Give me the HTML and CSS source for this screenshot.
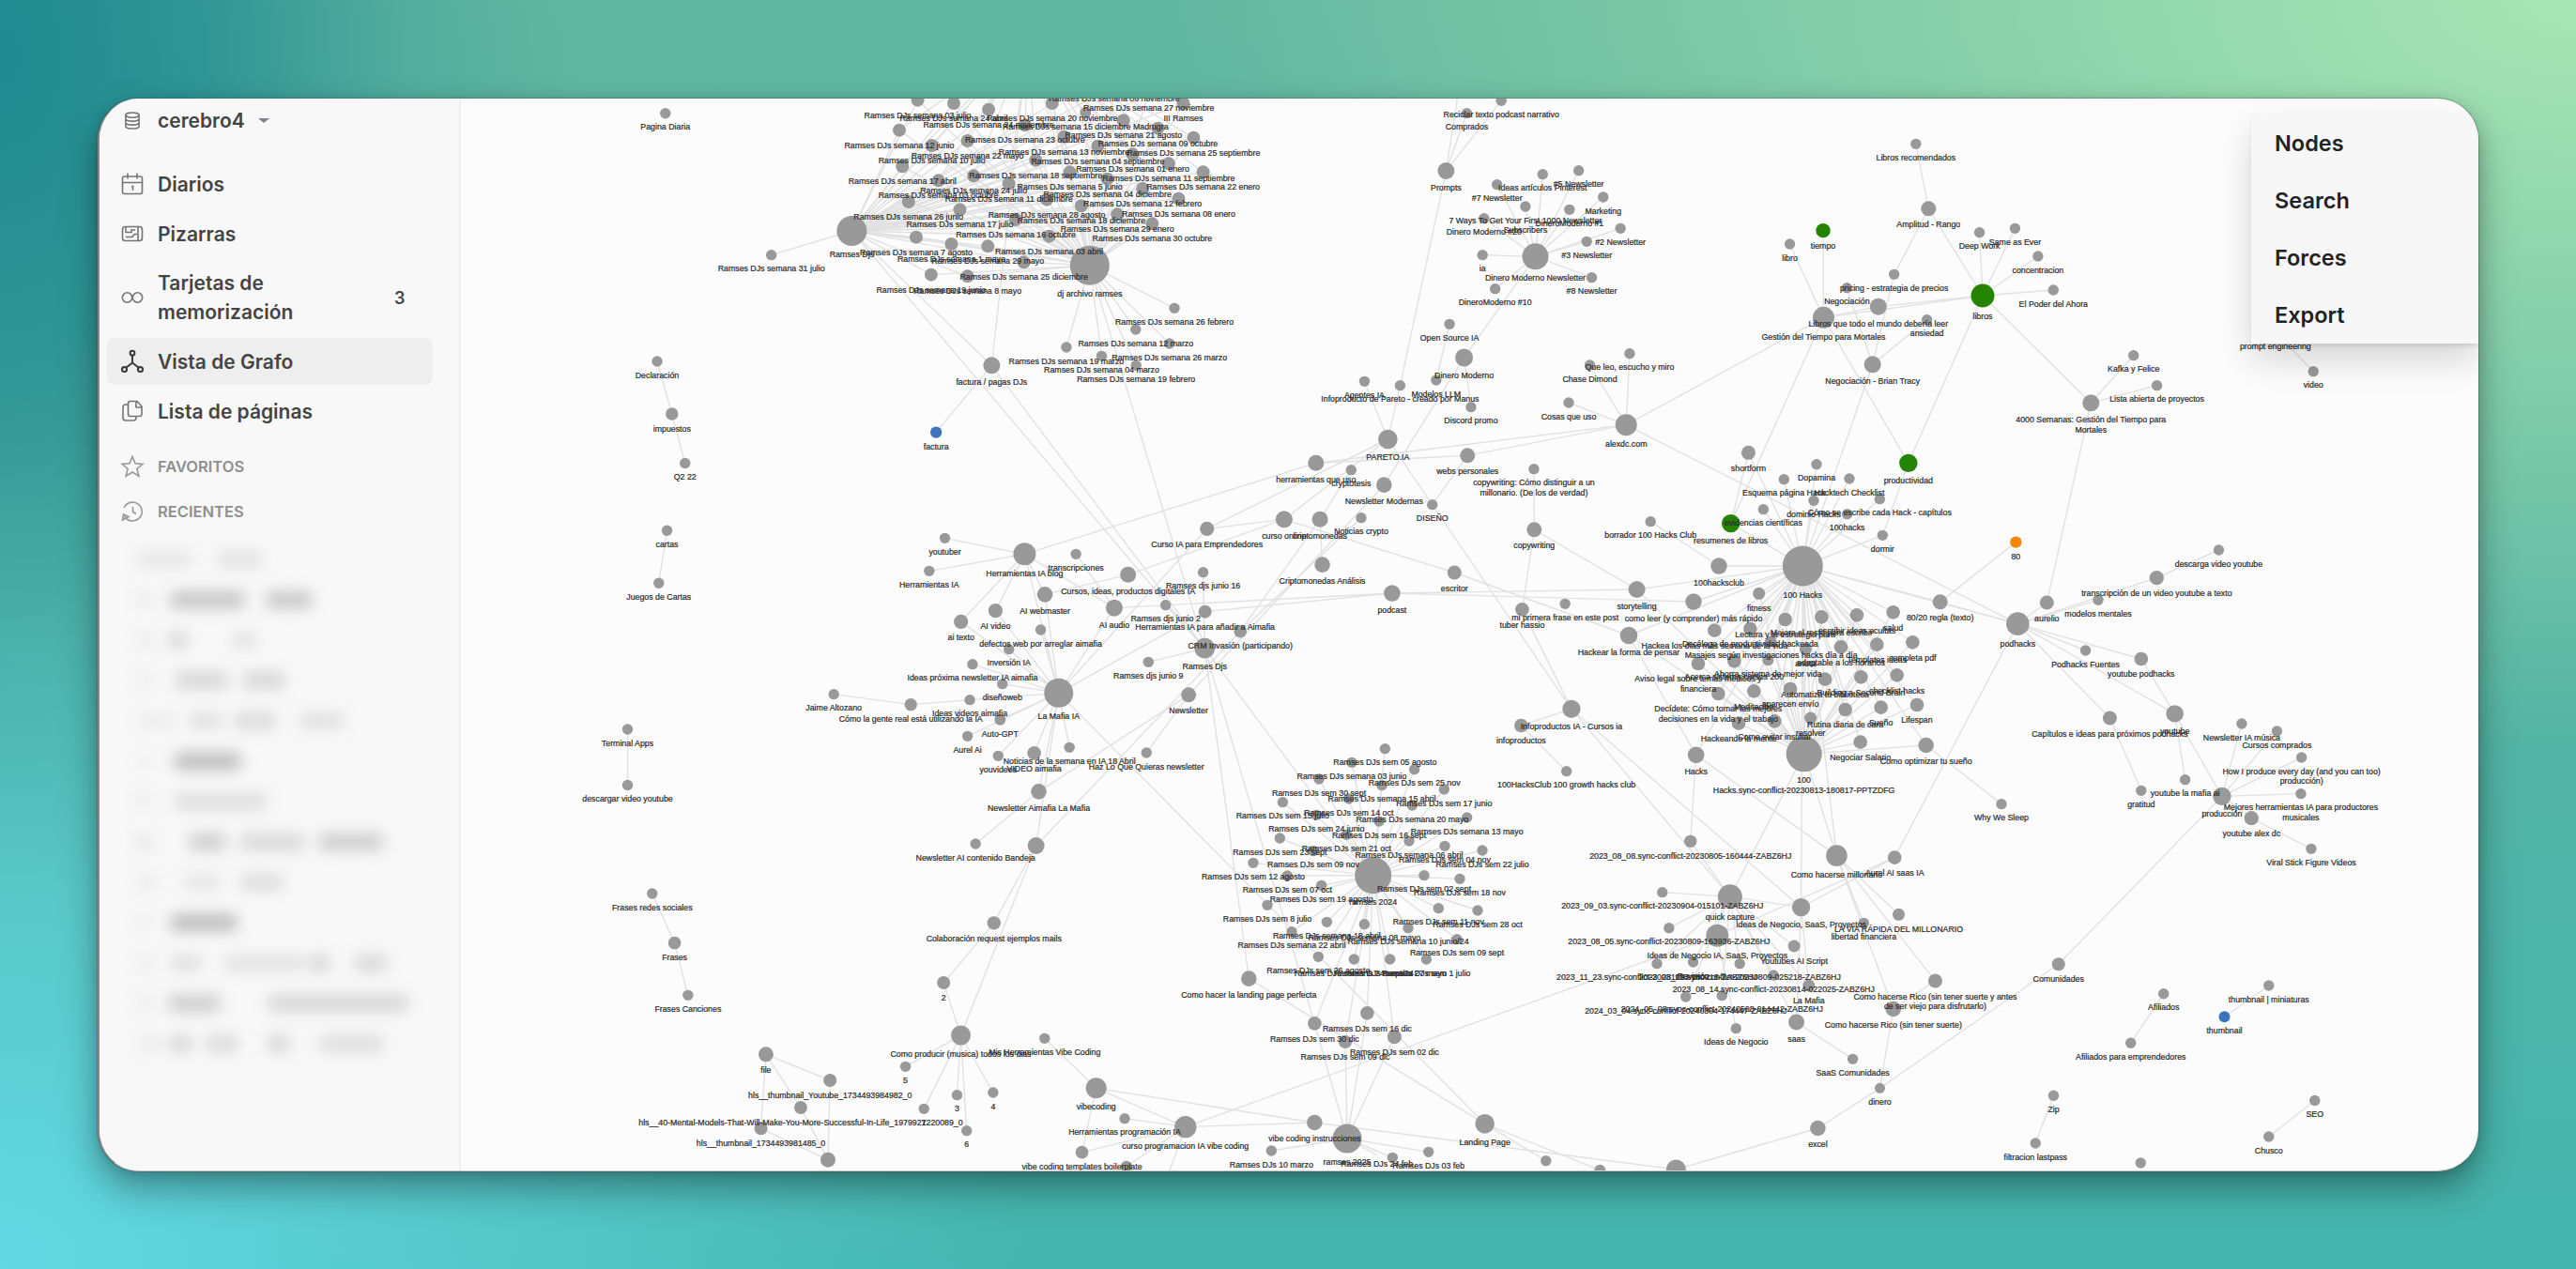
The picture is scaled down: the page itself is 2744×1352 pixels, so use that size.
FILE: index.html
```html
<!DOCTYPE html>
<html lang="es">
<head>
<meta charset="utf-8">
<title>cerebro4</title>
<link rel="stylesheet" href="styles.css">
</head>
<body>
<div class="window">
  <aside class="sidebar">
    <div class="row repo">
      <svg class="icon" viewBox="0 0 24 24"><ellipse cx="12" cy="4.500" rx="9" ry="3.300"/><path d="M3 4.500v15c0 1.900 4 3.300 9 3.300s9-1.400 9-3.300v-15M3 9.500c0 1.900 4 3.300 9 3.300s9-1.400 9-3.300M3 14.500c0 1.900 4 3.300 9 3.300s9-1.400 9-3.300"/></svg>
      <span>cerebro4</span><i class="caret"></i>
    </div>
    <nav class="nav">
      <a class="row item"><svg class="icon" viewBox="0 0 24 24"><rect x="1.500" y="4" width="21" height="18.500" rx="2"/><path d="M1.500 10.500h21M7 .5v6M17 .5v6M11 14.500h1.500v4.500"/></svg><span>Diarios</span></a>
      <a class="row item"><svg class="icon" viewBox="0 0 24 24"><rect x="1.500" y="4.500" width="21" height="15" rx="3"/><path d="M5 5v5.500h6V8h4M5 15.500h7l2-3h3M18 5v14"/></svg><span>Pizarras</span></a>
      <a class="row item tall"><svg class="icon" viewBox="0 0 24 24"><circle cx="6.500" cy="12" r="5.200"/><circle cx="17.500" cy="12" r="5.200"/></svg><span>Tarjetas de memorización</span><b class="count">3</b></a>
      <a class="row item active"><svg class="icon" viewBox="0 0 24 24"><circle cx="12" cy="3.200" r="2.400"/><circle cx="3.500" cy="20.500" r="2.600"/><circle cx="20.500" cy="20.500" r="2.600"/><path d="M12 6v8M12 13.500l-6.500 5M12 13.500l6.500 5"/></svg><span>Vista de Grafo</span></a>
      <a class="row item"><svg class="icon" viewBox="0 0 24 24"><path d="M10 1.500h7l5 5.500v8a2.500 2.500 0 0 1-2.500 2.500H10A2.500 2.500 0 0 1 7.500 15V4A2.500 2.500 0 0 1 10 1.500zM16 1.500V8h6M7.500 5H5a3 3 0 0 0-3 3v11a3 3 0 0 0 3 3h8a3 3 0 0 0 3-3v-1.500"/></svg><span>Lista de páginas</span></a>
    </nav>
    <div class="row section"><svg class="icon" viewBox="0 0 24 24"><path d="M12 1.500l3 7.300 8 .6-6.100 5.100 2 7.700L12 18l-6.900 4.200 2-7.700L1 9.400l8-.6z"/></svg><span>FAVORITOS</span></div>
    <div class="row section"><svg class="icon" viewBox="0 0 24 24"><path d="M3.500 17A10 10 0 1 0 3 8M1.500 21l1-6 5.500 2.500zM12.500 7v5.500l3.500 2"/></svg><span>RECIENTES</span></div>
    <div class="recents" id="recents"></div>
  </aside>
  <main class="canvas">
    <svg class="graph" id="graph" viewBox="491 105 2149 1142" preserveAspectRatio="none"></svg>
    <div class="panel">
      <div class="tab">Nodes</div>
      <div class="tab">Search</div>
      <div class="tab">Forces</div>
      <div class="tab">Export</div>
    </div>
  </main>
</div>
<script src="graph.js"></script>
</body>
</html>
```
FILE: styles.css
```css
* { box-sizing: border-box; }
body {
  margin: 0;
  width: 2744px;
  height: 1352px;
  padding: 105px 104px;
  overflow: hidden;
  font-family: Inter, "Liberation Sans", sans-serif;
  background:
    radial-gradient(ellipse 620px 900px at 0 60px, #1f8a91 0%, rgba(31, 138, 145, .75) 35%, rgba(31, 138, 145, .22) 70%, rgba(31, 138, 145, 0) 100%),
    radial-gradient(ellipse 1100px 900px at 0 1352px, #62d8e2 0%, rgba(98, 216, 226, 0) 100%),
    radial-gradient(ellipse 1500px 800px at 2744px 0, #a8e5b4 0%, rgba(168, 229, 180, 0) 100%),
    linear-gradient(180deg, #62b7a0 0%, #55b3a2 50%, #44b5ae 100%);
}
.window {
  display: flex;
  width: 2536px;
  height: 1143px;
  border-radius: 44px;
  overflow: hidden;
  background: #fcfcfc;
  border-left: 2px solid #8d8686;
  border-bottom: 1px solid #c9c9c9;
  box-shadow: 0 0 0 1px rgba(70, 70, 70, .3), 0 18px 38px rgba(0, 0, 0, .36), 0 2px 12px rgba(0, 0, 0, .13);
}
.sidebar {
  width: 385px;
  flex: none;
  background: #f8f8f8;
  border-right: 2px solid #f1f1f1;
  padding-left: 8px;
  display: flex;
  flex-direction: column;
}
.row {
  display: flex;
  align-items: center;
  gap: 15px;
  padding-left: 15px;
  font-size: 21px;
  font-weight: 600;
  color: #444;
}
.icon {
  width: 24px;
  height: 24px;
  flex: none;
  fill: none;
  stroke: #747474;
  stroke-width: 1.6;
  overflow: visible;
}
.repo { height: 46px; margin-bottom: 20px; }
.repo .icon { height: 19px; stroke-width: 2; }
.caret {
  border: 6px solid transparent;
  border-top: 5px solid #7d8190;
  border-bottom: 0;
  margin-left: -1px;
}
.nav { display: flex; flex-direction: column; gap: 3px; width: 347px; }
.item { height: 50px; border-radius: 8px; line-height: 31px; }
.tall { height: 80px; }
.tall span { width: 200px; }
.count { font-size: 18px; font-weight: 600; margin-left: 37px; }
.active { background: #eee; }
.active .icon { stroke: #3a3a3a; stroke-width: 2; }
.section { height: 48px; font-size: 16.5px; color: #8f8f8f; }
.section .icon { stroke: #999; }
.nav + .section { margin-top: 10px; }
.recents {
  margin: 6px 0 0 19px;
  width: 320px;
  height: 588px;
  overflow: hidden;
  display: flex;
  flex-direction: column;
  gap: 25px;
  padding-top: 12px;
}
.blurred { display: flex; height: 18px; flex: none; filter: blur(8px); }
.blurred i { height: 18px; border-radius: 7px; background: #6a6a6a; }
.canvas { position: relative; flex: 1; }
.graph { display: block; width: 100%; height: 100%; }
.edge { stroke: #e1e1e1; stroke-width: 1.4; }
.node { fill: #999; }
.green { fill: #248400; }
.blue { fill: #3c74bf; }
.orange { fill: #f48709; }
.label {
  font: 8.8px "Liberation Sans", Arial, sans-serif;
  fill: #2c2c2c;
  stroke: #2c2c2c;
  stroke-width: .22;
  text-anchor: middle;
}
.panel {
  position: absolute;
  top: 17px;
  right: 0;
  width: 242px;
  height: 244px;
  background: #f7f7f7;
  box-shadow: 0 18px 34px rgba(0, 0, 0, .15), 0 4px 4px -1px rgba(0, 0, 0, .1);
}
.tab {
  height: 61px;
  line-height: 61px;
  padding-left: 25px;
  font-size: 23.5px;
  font-weight: 600;
  color: #222;
}
```
FILE: graph.js
```js
// Each sector: origin and scale of its local grid, then one node per line:
//   x y radius[colour] @id label > linked ids
// "&a b" sets links shared by the lines after it. "~" and "^" expand to series titles.
const SECTORS = [
[0, 0, 1/1.75, 1/1.75, `
405 69 5.7 Pagina Diaria
400 220 5.7 @dec Declaración
409 252 6.7 @imp impuestos > dec
417 282 5.7 Q2 22 > imp
406 323 5.7 @car cartas
401 355 5.7 Juegos de Cartas > car
382 444 5.7 @ter Terminal Apps
382 478 5.7 descargar video youtube > ter
397 544 5.7 Frases redes sociales > fr
1253 587 7 @comun Comunidades
1317 605 5.7 @afi Afiliados
1297 635 5.7 Afiliados para emprendedores > afi
1381 600 5.7 @mini thumbnail | miniaturas
1354 619 6b thumbnail > mini
1409 670 5.7 @seo SEO
1381 692 5.7 Chusco > seo
1250 667 5.7 @zip Zip
1239 696 5.7 filtracion lastpass > zip
1303 708 5.7`],
[740, 100, 2.45, 3, `
870 -170 0 @top > h1 h2 fac
410 438 16 @h1 Ramses Djs
1031 548 21 @h2 dj archivo ramses
&h1
200 515 5.7 ~31 julio
&h1 h2 top
582 20 7 ~03 julio
676 30 7 ~24 abril
767 50 7 ~24 noviembre
1020 60 6 ~15 diciembre Madrugra
933 30 7 ~20 noviembre
1095 -28 5 ~06 noviembre
1185 3 5 ~27 noviembre
1119 85 7 ~21 agosto
1275 30 7 III Ramses
1209 110 7 ~09 octubre
1302 140 7 ~25 septiembre
534 116 7 ~12 junio
619 165 7 ~10 julio
712 150 7 ~22 mayo
862 100 7 ~23 octubre
964 137 7 ~13 noviembre
1052 167 7 ~04 septiembre
1143 193 7 ~01 enero
1237 223 7 ~11 septiembre
1327 250 7 ~22 enero
542 232 7 ~17 abril
890 212 7 ~18 septiembre
636 277 7 ~03 octubre
728 262 7 ~24 julio
979 250 7 ~5 junio
820 287 7 ~11 diciembre
1077 272 7 ~04 diciembre
1169 303 7 ~12 febrero
1263 335 7 ~08 enero
&h1 h2
558 345 7 ~26 junio
692 370 7 ~17 julio
919 338 7 ~28 agosto
1009 358 7 ~18 diciembre
1103 385 7 ~29 enero
1194 415 7 ~30 octubre
838 402 7 ~16 octubre
578 458 7 ~7 agosto
670 480 7 ~1 mayo
765 487 7 ~29 mayo
925 455 7 ~03 abril
617 578 7 ~19 junio
712 583 7 ~8 mayo
859 538 7 ~25 diciembre
&h2
1252 685 5.7 ~26 febrero
1151 753 5.7 ~12 marzo
1239 798 5.7 ~26 marzo
970 810 5.7 ~19 marzo
1062 838 5.7 ~04 marzo
1152 868 5.7 ~19 febrero
&
775 868 9 @fac factura / pagas DJs > h1 rdj`],
[1380, 100, 2.45, 3, `
432 -60 0 > prompts
537 22 5.7 Reciclar texto podcast narrativo > prompts
447 62 5.7 Comprados > prompts
393 246 9 @prompts Prompts
&dmn
526 290 5.7 #7 Newsletter
645 257 5.7 Ideas artículos Pinterest
739 245 5.7 #5 Newsletter
803 330 5.7 Marketing
600 360 5.7 7 Ways To Get Your First 1000 Newsletter|Subscribers
715 370 5.7 DineroModerno #1
492 398 5.7 Dinero Moderno #20
848 430 5.7 #2 Newsletter
760 472 5.7 #3 Newsletter
488 515 5.7 ia
773 587 5.7 #8 Newsletter
521 623 5.7 DineroModerno #10
&
626 520 14 @dmn Dinero Moderno Newsletter > dm
402 736 5.7 Open Source IA > mllm
440 843 9.5 @dm Dinero Moderno > nmod
367 915 5.7 @mllm Modelos LLM
180 919 5.7 Agentes IA > pareto
273 932 5.7 Infoproducto de Pareto - creado por Manus > pareto prompts
458 1001 5.7 Discord promo > dm
241 1104 10.3 @pareto PARETO.IA > c1 cie dis
768 867 5.7 Chase Dimond > alex
872 830 5.7 Que leo, escucho y miro > alex
713 987 5.7 Cosas que uso > alex
863 1058 11.500 @alex alexdc.com > gest podh hqu
1290 480 5.7 libro > gest
1377 437 7.700g tiempo > gest
1378 715 11.500 @gest Gestión del Tiempo para Mortales > libros res prod
1439 620 5.7 Negociación > neg
1521 680 9 @llama Libros que todo el mundo debería leer > gest
1506 865 9 @neg Negociación - Brian Tracy > hacks
1182 1147 7.500 shortform > res hacks`],
[2000, 100, 2.376, 3, `
97 160 5.7 Libros recomendados > amp
129 367 8 @amp Amplitud - Rango > libros prec
258 443 5.7 Deep Work > libros
348 430 5.7 Same as Ever > libros
406 519 5.7 concentracion > libros
445 627 5.7 El Poder del Ahora > libros
266 645 12.500g @libros libros > llama k4000 prod
42 577 5.7 @prec pricing - estrategia de precios > neg
125 722 5.7 ansiedad > neg
648 836 5.7 Kafka y Felice > k4000
707 932 5.7 Lista abierta de proyectos > k4000
540 988 9 @k4000 4000 Semanas: Gestión del Tiempo para|Mortales
1007 763 5.7 @pe prompt engineering
1103 887 5.7 video > pe
78 1180 9.700g @prod productividad > dorm`],
[740, 440, 2.45, 3, `
630 62 6.200b factura > fac
653 400 5.7 youtuber > hia
612 505 5.7 Herramientas IA > hia
861 451 12 @hia Herramientas IA blog > mafia
995 451 5.7 transcripciones > aud
1131 517 8.500 @cur Cursos, ideas, productos digitales IA > c1
914 580 8.300 AI webmaster > hia mafia cur
785 632 7.600 AI video > hia mafia
695 667 7.600 ai texto > hia mafia
1095 623 9 @aud AI audio > hia mafia pod
903 693 5.7 defectos web por arreglar aimafia > mafia
820 755 5.7 Inversión IA > mafia
725 803 5.7 Ideas próxima newsletter IA aimafia > mafia
803 866 5.7 diseñoweb > mafia
363 899 5.7 Jaime Altozano > cg
564 932 6.700 @cg Cómo la gente real está utilizando la IA
718 917 5.7 Ideas videos aimafia > cg mafia
797 980 6 Auto-GPT > mafia
712 1033 5.7 Aurel Ai > mafia
792 1096 5.7 youvideos > mafia
886 1087 7.300 VIDEO aimafia > mafia
978 1069 5.7 Noticias de la semana en IA 18 Abril > mafia
950 895 15.500 @mafia La Mafia IA > hma lp
1179 1086 5.7 Haz Lo Que Quieras newsletter > newsl
1289 901 8 @newsl Newsletter > nmod
898 1210 8.300 @nam Newsletter Aimafia La Mafia > mafia newsl
733 1377 5.7 Newsletter AI contenido Bandeja > nam
891 1383 9 @bj > mafia crm
1184 796 5.7 Ramses djs junio 9 > rdj
1327 509 5.7 Ramses djs junio 16 > rdj
1229 614 5.7 Ramses djs junio 2 > rdj
1332 635 7 @hma Herramientas IA para añadir a Aimafia > pod
1331 752 10.800 @rdj Ramses Djs > h1 h2 r24 dic30
1424 698 6.800 @crm CRM Invasión (participando)
1337 370 7.600 @cie Curso IA para Emprendedores > c1 mafia`],
[1240, 440, 2.8, 3, `
453 160 8.500 @hqu herramientas que uso > hia webs
558 182 5.7 cryptotesis > c2
905 136 8 @webs webs personales > dis alex
656 230 8.300 @nmod Newsletter Modernas
800 293 5.7 @dis DISEÑO > infop
1103 179 5.7 copywriting: Cómo distinguir a un|millonario. (De los de verdad) > copy
358 340 9 @c1 curso online > escr
465 340 8.500 @c2 criptomonedas > ca crm
588 335 5.7 Noticias crypto > crm
1104 373 8 @copy copywriting > story th
472 485 8.300 @ca Criptomonedas Análisis
866 510 7.500 @escr escritor > hk1
680 576 8.800 @pod podcast > story ch
1451 347 5.7 borrador 100 Hacks Club > hclub
1068 628 7.300 @th tuber hassio > infop
1196 610 5.7 mi primera frase en este post
1410 564 9 @story storytelling > hacks h100
1386 711 9.300 @hk1 Hackear la forma de pensar > hacks hks h100
1215 946 9.600 @infop Infoproductos IA - Cursos ia > qc idn
1065 999 7.300 infoproductos > infop club`],
[1720, 440, 3, 3, `
&hacks
541 212 5.7 Esquema página Hack
645 164 5.7 Dopamina
750 210 5.7 Hacktech Checklist
636 280 5.7 dominio Hacks
847 275 5.7 Cómo se escribe cada Hack - capítulos
475 308 5.7 evidencias científicas
743 323 5.7 100hacks
856 391 5.7 @dorm dormir
371 353 9.700g @res resumenes de libros
333 489 8.700 @hclub 100hacksclub
252 603 8.700 @ch como leer (y comprender) más rápido
&hacks h100
461 577 6.5 fitness
545 660 7.300 Lectura y la estrategia para
661 652 7.300 Mejora el resto para escribir
774 646 7.300 escribir ideas ocultas
890 637 7.300 salud
319 695 7.300 Hackea los días más semana de la vida
433 690 7.300 Decálogo de productividad hackeada
500 730 6 Masajes según investigaciones hacks día a día
610 755 6.500 anota
723 748 7.300 adaptable a los horarios
838 740 7.300 Templates ideas
952 733 7.300 completa pdf
267 801 7.300 Aviso legal sobre temas médicos y|financiera
382 793 7.300 Acerca sistema cursos 200
490 790 6 Ahorra sistema de mejor vida
672 851 7.300 Automatiza tu biblioteca
787 844 7.300 Building a Second Brain
902 838 7.300 checklist hacks
331 897 7.300 Decídete: Cómo tomar las mejores|decisiones en la vida y el trabajo
445 889 7.300 Meditación
561 882 7.300 aparecen envío
737 948 7.300 Rutina diaria de cara
851 941 7.300 Sueño
966 933 7.300 Lifespan
396 992 7.300 Hackeando la mente
511 985 7.300 Como evitar insultar
626 975 6.500 resolver
785 1052 7.300 Negociar Salario
995 1062 8.300 @sue Como optimizar tu sueño
&
601 489 21.500 @hacks 100 Hacks > hks chm h100 idn
1040 604 8 @p80 80/20 regla (texto) > hacks podh
1282 413 6.200o 80 > p80
1288 674 12.300 @podh podhacks > hacks aas
1381 606 7.500 aurelio > k4000 podh
260 1093 8.800 @hks Hacks > sc1 chm
605 1090 19 @h100 100|Hacks.sync-conflict-20230813-180817-PPTZDFG > chm qc
1236 1250 5.7 Why We Sleep > sue`],
[2120, 540, 2.904, 3, `
707 138 5.7 descarga video youtube > tr
515 227 7.600 @tr transcripción de un video youtube a texto > podh
334 298 5.7 modelos mentales > podh
295 459 5.7 Podhacks Fuentes > podh
467 486 7.300 youtube podhacks > podh yt
571 661 9.200 @yt youtube > podh prodg
370 675 7.500 @cap Capítulos e ideas para próximos podhacks > podh
467 907 5.7 gratitud > cap
603 872 5.7 youtube la mafia ai > yt
&prodg
778 693 5.7 Newsletter IA música
887 717 5.7 Cursos comprados
963 801 5.7 How I produce every day (and you can too)|producción)
961 917 5.7 Mejores herramientas IA para productores|musicales
808 995 7.600 @yad youtube alex dc
&
717 925 9.700 @prodg producción > comun
993 1093 5.7 Viral Stick Figure Videos > yad`],
[1260, 780, 3, 3, `
608 458 19.500 @r24 ramses 2024
&r24
646 53 5.7 ^05 agosto
540 97 5.7 ~03 junio
740 119 5.7 ^25 nov
435 150 5.7 ^30 sept
636 170 5.7 ~15 abril
835 183 5.7 ^17 junio
319 224 5.7 ^15 julio
530 213 5.7 ^14 oct
733 234 5.7 ~20 mayo
908 273 5.7 ~13 mayo
427 265 5.7 ^24 junio
627 285 5.7 ^16 sept
310 339 5.7 ^23 sept
523 328 5.7 ^21 oct
417 380 5.7 ^09 nov
723 348 5.7 ~06 abril
837 364 5.7 ^04 nov
957 378 5.7 ^22 julio
225 418 5.7 ^12 agosto
334 459 5.7 ^07 oct
443 490 5.7 ^19 agosto
771 458 5.7 ^02 sept
885 469 5.7 ^18 nov
270 553 5.7 ^8 julio
460 607 5.7 ~18 abril
580 614 5.7 ~08 mayo
817 563 5.7 ^11 nov
942 570 5.7 ^28 oct
720 626 5.7 ~10 junio/24
876 662 5.7 ^09 sept
348 638 5.7 ~22 abril
433 718 5.7 ^26 agosto
547 726 5.7 ~24 sept/24
662 726 5.7 ~27 mayo
778 726 5.7 ^1 julio
&r24 r25
421 931 7.300 @dic30 ^30 dic
589 898 7.300 ^16 dic
519 990 7 @dic9 ^09 dic
676 974 7.500 ^02 dic
&
211 788 8.300 Como hacer la landing page perfecta > rdj lp
525 1299 15.500 @r25 ramses 2025
421 1248 8.300 @vci vibe coding instrucciones > vc cpi bot
283 1338 5.7 Ramses DJs 10 marzo > r25
670 1360 5.7 > r25
620 1352 0 Ramses DJs 24 feb > r25
785 1342 5.7 Ramses DJs 03 feb > r25
965 1252 10.300 @lp Landing Page > b1 b2
1226 125 5.7 @club 100HacksClub 100 growth hacks club`],
[1640, 860, 2.8, 3, `
&qc
450 109 6.700 @sc1 2023_08_08.sync-conflict-20230805-160444-ZABZ6HJ
366 272 5.7 2023_09_03.sync-conflict-20230904-015101-ZABZ6HJ
386 386 5.7 2023_08_05.sync-conflict-20230809-163936-ZABZ6HJ
350 500 5.7 2023_11_23.sync-conflict-20231123-180215-ZABZ6HJ
458 495 5.7 Revisión
597 500 5.7 2023_08_09.sync-conflict-20230809-025218-ZABZ6HJ
698 537 5.7 2023_08_14.sync-conflict-20230814-022025-ZABZ6HJ
436 606 5.7 2024_03_04.sync-conflict-20240304-174447-ZABZ6HJ
544 602 5.7 2024_05_08.sync-conflict-20240508-014442-ZABZ6HJ
759 444 6.500 Youtubes AI Script
803 570 6.500 La Mafia > idn
&
568 286 13 @qc quick capture > saas idn
530 410 12 @idia Ideas de Negocio IA, SaaS, Proyectos > cpi aas
780 320 9.700 @idn Ideas de Negocio, SaaS, Proyectos > saas
886 155 11.300 @chm Como hacerse millonario
1059 161 7.300 @aas Aurel AI saas IA > idn
1071 343 6.500 LA VÍA RÁPIDA DEL MILLONARIO > chm
967 370 5.7 libertad financiera > chm
1180 555 7.500 Como hacerse Rico (sin tener suerte y antes|de ser viejo para disfrutarlo) > chm ch2
1055 645 8.300 @ch2 Como hacerse Rico (sin tener suerte) > chm din
766 687 8.500 @saas saas
586 707 5.7 Ideas de Negocio > idia
934 805 5.7 SaaS Comunidades > saas
1015 898 5.500 @din dinero > ex comun
830 1026 8.300 @ex excel > bot
407 1158 10.500 @bot
180 1160 6 @b2
19 1130 5.7 @b1`],
[640, 960, 2.24, 3, `
176 134 6.800 @fr Frases
208 301 5.7 Frases Canciones > fr
938 70 7.200 Colaboración request ejemplos mails > bj n2
818 261 7 @n2 2 > cp
859 429 10.500 @cp Como producir (musica) todos los dias > bj
1059 439 5.7 Mis Herramientas Vibe Coding > vc
&cp
727 529 5.7 5
771 664 5.7 1
850 620 5.7 3
936 612 5.7 4
873 734 5.7 6
&
394 490 8 @file file
&file hb
547 573 7 hls__thumbnail_Youtube_1734493984982_0
477 660 7 hls__40-Mental-Models-That-Will-Make-You-More-Successful-In-Life_1979927220089_0
382 727 7 hls__thumbnail_1734493981485_0
&
542 827 8 @hb
1182 598 11 @vc vibecoding > cpi vct
&cpi
1250 695 5.7 Herramientas programación IA
1148 803 6.800 @vct vibe coding templates boilerplate
1254 848 6
1330 960 0
&
1395 722 11.700 @cpi curso programacion IA vibe coding`]
];

const NS = "http://www.w3.org/2000/svg";
const graph = document.getElementById("graph");
const COLOURS = { g: " green", b: " blue", o: " orange" };

function draw(parent, tag, attrs, text) {
  const el = document.createElementNS(NS, tag);
  for (const k in attrs) el.setAttribute(k, attrs[k]);
  if (text) el.textContent = text;
  parent.appendChild(el);
}

const nodes = [];
const byId = {};
for (const [ox, oy, sx, sy, text] of SECTORS) {
  let shared = [];
  for (const line of text.trim().split("\n")) {
    if (line[0] === "&") { shared = line.slice(1).split(" ").filter(Boolean); continue; }
    const [head, own] = line.split(/\s?> ?/);
    const m = head.match(/^(\S+) (\S+) ([\d.]+)([gbo]?)(?: @(\w+))?(?: (.*))?$/);
    const node = {
      x: ox + m[1] / sx, y: oy + m[2] / sy, r: +m[3], colour: COLOURS[m[4]] || "",
      label: (m[6] || "").replace("~", "Ramses DJs semana ").replace("^", "Ramses DJs sem "),
      links: shared.concat(own ? own.split(" ") : [])
    };
    nodes.push(node);
    if (m[5]) byId[m[5]] = node;
  }
}
for (const n of nodes) for (const id of n.links) {
  const t = byId[id];
  if (t) draw(graph, "line", { class: "edge", x1: n.x, y1: n.y, x2: t.x, y2: t.y });
}
for (const n of nodes) if (n.r) draw(graph, "circle", { class: "node" + n.colour, cx: n.x, cy: n.y, r: n.r });
for (const n of nodes) {
  const lines = n.label.includes(" | ") ? [n.label] : n.label.split("|");
  lines.forEach((t, i) => t && draw(graph, "text", { class: "label", x: n.x, y: n.y + n.r + 12 + i * 10.5 }, t));
}

// Hidden recent pages: [left gap, width, opacity] per blurred word
const RECENTS = [
  [[12, 60, .12], [25, 50, .14]], [[10, 20, .08], [18, 80, .36], [22, 50, .34]],
  [[12, 20, .08], [14, 22, .22], [45, 28, .14]], [[12, 16, .08], [26, 56, .24], [16, 45, .24]],
  [[14, 40, .08], [14, 36, .16], [12, 46, .2], [24, 48, .16]], [[14, 14, .06], [24, 72, .42]],
  [[10, 18, .08], [24, 100, .18]], [[10, 20, .12], [38, 40, .3], [14, 70, .22], [14, 70, .3]],
  [[14, 20, .1], [28, 40, .12], [20, 48, .18]], [[12, 18, .06], [18, 72, .42]],
  [[12, 18, .08], [18, 34, .16], [22, 90, .14], [4, 20, .26], [26, 36, .22]],
  [[12, 18, .08], [16, 56, .3], [50, 150, .24]], [[12, 30, .08], [6, 24, .24], [14, 36, .2], [30, 24, .24], [30, 70, .18]]
];
document.getElementById("recents").innerHTML = RECENTS.map(row =>
  `<div class="blurred">${row.map(([gap, w, o]) => `<i style="margin-left:${gap}px;width:${w}px;opacity:${o}"></i>`).join("")}</div>`
).join("");
```
